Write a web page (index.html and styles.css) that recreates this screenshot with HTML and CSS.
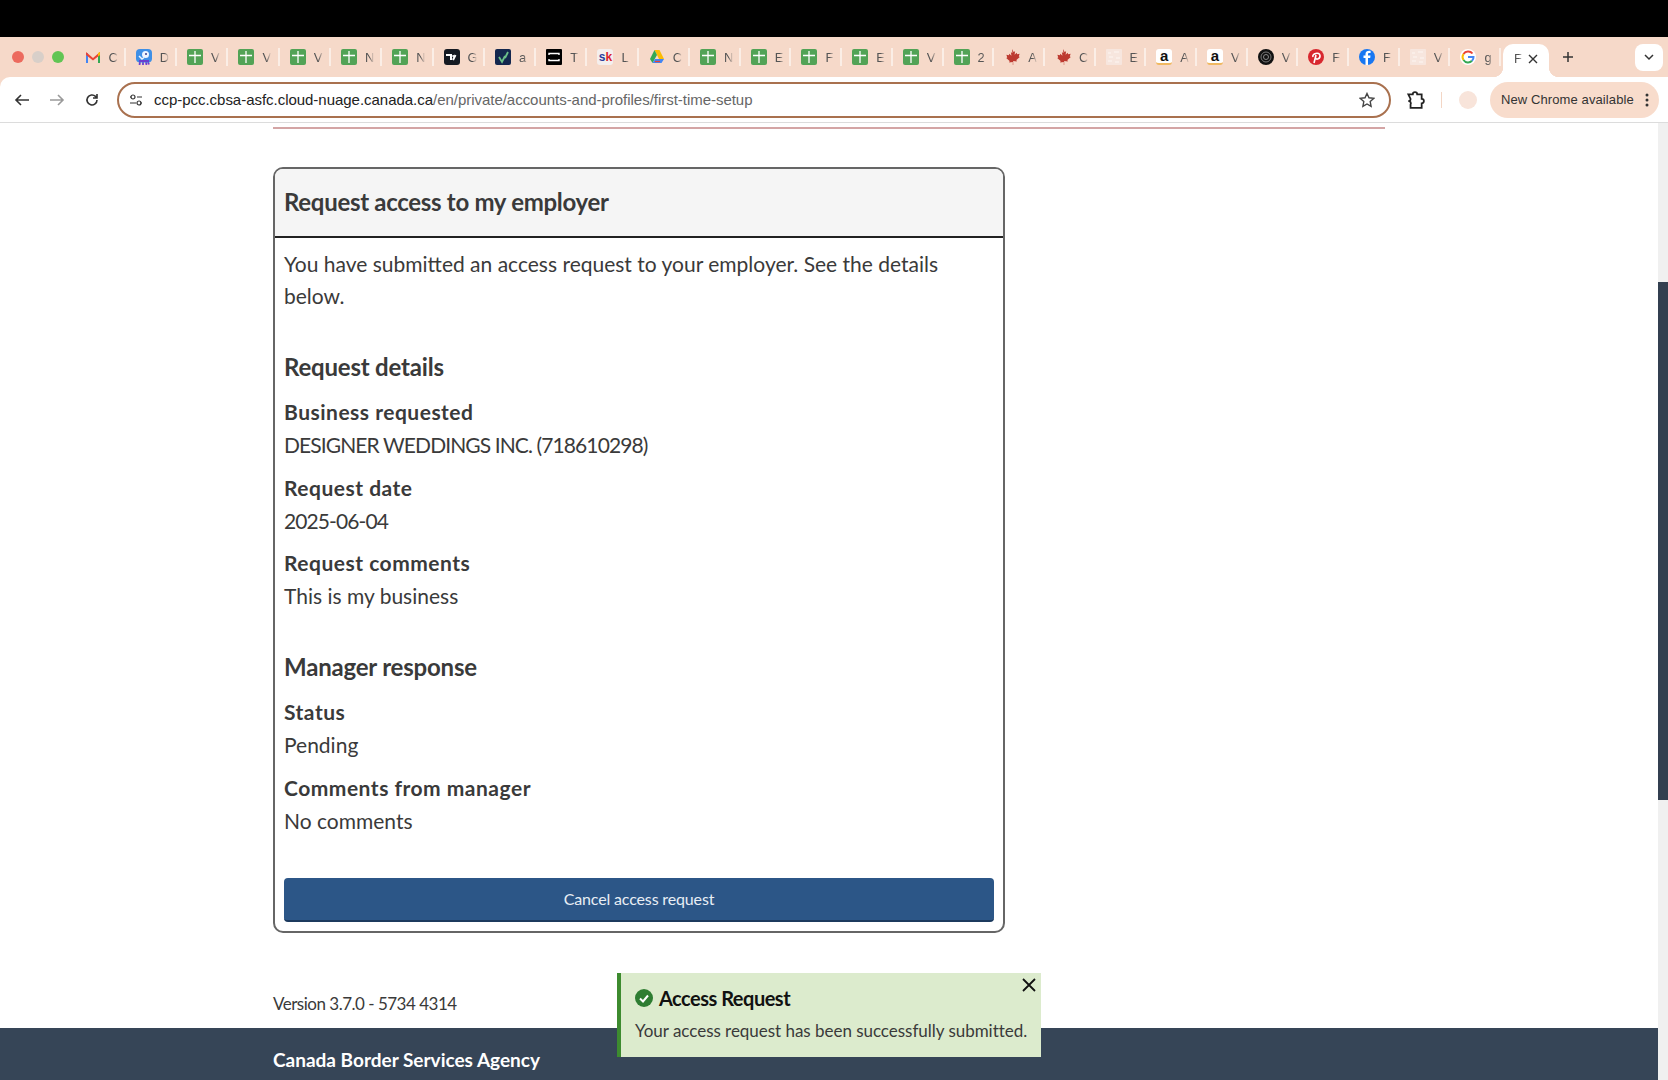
FILE: index.html
```html
<!DOCTYPE html>
<html lang="en">

<head>
    <meta charset="UTF-8">
    <meta name="viewport" content="width=device-width, initial-scale=1.0">
    <title>Request access to my employer</title>
    <link rel="stylesheet" href="styles.css">
</head>

<body>
    <svg class="defs" width="0" height="0">
        <symbol id="sheet" viewBox="0 0 16 16">
            <rect width="16" height="16" rx="2" fill="#52a356" />
            <path d="M8 2v12M2 6.500h12" stroke="#fff" stroke-width="1.300" />
        </symbol>
        <symbol id="maple" viewBox="0 0 16 16">
            <path fill="#bd3a30" d="M8 0l1.600 3 1.500-.8-.5 3.600 2-2 .6 1.400 2.400-.4-.8 2.600 1 .6-3.400 3 .4 1.400-3.600-.5V16h-.4v-3.100l-3.600.5.4-1.400-3.400-3 1-.6-.8-2.600 2.400.4.6-1.400 2 2-.5-3.600 1.500.8z" />
        </symbol>
        <symbol id="blank" viewBox="0 0 16 16">
            <rect width="16" height="16" rx="1" fill="#f7e6de" />
            <path d="M2 4h3M8 3h5M3 8h4M10 9h4M2 12h4M9 13h4" stroke="#fbf1ec" stroke-width="1.500" />
        </symbol>
    </svg>

    <div class="top-bar"></div>

    <div class="tab-strip">
        <div class="traffic">
            <span class="dot dot-red"></span>
            <span class="dot dot-grey"></span>
            <span class="dot dot-green"></span>
        </div>
        <div class="tabs">
            <div class="tab">
                <svg class="fav" viewBox="0 0 16 16">
                    <path d="M1 14V4l2 0 0 10z" fill="#4285f4" />
                    <path d="M13 14V4l2 0 0 10z" fill="#34a853" />
                    <path d="M1 3l7 6 7-6v3L8 11.500 1 6z" fill="#ea4335" />
                    <path d="M13 4l2-1v3l-2 1.500z" fill="#fbbc04" />
                </svg>
                <span class="tab-name">C</span>
            </div>
            <div class="tab">
                <svg class="fav" viewBox="0 0 16 16">
                    <path d="M4 13l-.5 3M7 13v3M10 13l.5 3M12 13l1 2.500" stroke="#6a3fd0" stroke-width="1.800" />
                    <rect y="0" width="16" height="13.500" rx="4" fill="#3f8fe6" />
                    <path d="M3 13h10v-2H3z" fill="#6a3fd0" />
                    <circle cx="9.500" cy="5.500" r="3.500" fill="#eef5ff" />
                    <circle cx="10" cy="5" r="1" fill="#3a3a8a" />
                    <path d="M3 7l3 3 2-1.500" stroke="#eef5ff" stroke-width="1.500" fill="none" />
                </svg>
                <span class="tab-name">D</span>
            </div>
            <div class="tab"><svg class="fav"><use href="#sheet" /></svg><span class="tab-name">V</span></div>
            <div class="tab"><svg class="fav"><use href="#sheet" /></svg><span class="tab-name">V</span></div>
            <div class="tab"><svg class="fav"><use href="#sheet" /></svg><span class="tab-name">V</span></div>
            <div class="tab"><svg class="fav"><use href="#sheet" /></svg><span class="tab-name">N</span></div>
            <div class="tab"><svg class="fav"><use href="#sheet" /></svg><span class="tab-name">N</span></div>
            <div class="tab">
                <svg class="fav" viewBox="0 0 16 16">
                    <rect width="16" height="16" rx="3" fill="#151a22" />
                    <path d="M2 6h5v5M9 11l2.500-5" stroke="#fff" stroke-width="2" fill="none" />
                    <circle cx="9.200" cy="7" r="1" fill="#fff" />
                </svg>
                <span class="tab-name">G</span>
            </div>
            <div class="tab">
                <svg class="fav" viewBox="0 0 16 16">
                    <rect width="16" height="16" rx="2" fill="#14274e" />
                    <path d="M4 8l3 5 3-6M10 9l3-6" stroke="#6cc08a" stroke-width="1.800" fill="none" />
                </svg>
                <span class="tab-name">a</span>
            </div>
            <div class="tab">
                <svg class="fav" viewBox="0 0 16 16">
                    <rect width="16" height="16" rx="1" fill="#000" />
                    <path d="M3 6V4.500h10V6M3 10v1.500h10V10" stroke="#fff" stroke-width="1.400" fill="none" />
                </svg>
                <span class="tab-name">T</span>
            </div>
            <div class="tab">
                <span class="fav fav-sk"><span class="sk-s">s</span><span class="sk-k">k</span></span>
                <span class="tab-name">L</span>
            </div>
            <div class="tab">
                <svg class="fav" viewBox="0 0 16 16">
                    <path d="M5.500 1h5L15 10H10z" fill="#fbbc04" />
                    <path d="M5.500 1L1 10l2.500 4L8 6z" fill="#34a853" />
                    <path d="M3.500 14h9L15 10H6z" fill="#4285f4" />
                    <path d="M6 12.500h5" stroke="#ea4335" stroke-width="1.200" />
                </svg>
                <span class="tab-name">C</span>
            </div>
            <div class="tab"><svg class="fav"><use href="#sheet" /></svg><span class="tab-name">N</span></div>
            <div class="tab"><svg class="fav"><use href="#sheet" /></svg><span class="tab-name">E</span></div>
            <div class="tab"><svg class="fav"><use href="#sheet" /></svg><span class="tab-name">F</span></div>
            <div class="tab"><svg class="fav"><use href="#sheet" /></svg><span class="tab-name">E</span></div>
            <div class="tab"><svg class="fav"><use href="#sheet" /></svg><span class="tab-name">V</span></div>
            <div class="tab"><svg class="fav"><use href="#sheet" /></svg><span class="tab-name">2</span></div>
            <div class="tab"><svg class="fav"><use href="#maple" /></svg><span class="tab-name">A</span></div>
            <div class="tab"><svg class="fav"><use href="#maple" /></svg><span class="tab-name">C</span></div>
            <div class="tab"><svg class="fav"><use href="#blank" /></svg><span class="tab-name">E</span></div>
            <div class="tab"><span class="fav fav-a">a</span><span class="tab-name">A</span></div>
            <div class="tab"><span class="fav fav-a">a</span><span class="tab-name">V</span></div>
            <div class="tab">
                <svg class="fav" viewBox="0 0 16 16">
                    <circle cx="8" cy="8" r="8" fill="#111" />
                    <circle cx="8" cy="8" r="5" fill="none" stroke="#777" />
                    <circle cx="8" cy="8" r="2.500" fill="none" stroke="#888" />
                </svg>
                <span class="tab-name">V</span>
            </div>
            <div class="tab">
                <svg class="fav" viewBox="0 0 16 16">
                    <circle cx="8" cy="8" r="8" fill="#d8282f" />
                    <path d="M6 14l2-8M5 8C3.500 4.500 11.500 2.500 12 6.500 12.300 10 8.500 11 7.500 9" stroke="#fff" stroke-width="1.600" fill="none" />
                </svg>
                <span class="tab-name">F</span>
            </div>
            <div class="tab">
                <svg class="fav" viewBox="0 0 16 16">
                    <circle cx="8" cy="8" r="8" fill="#1877f2" />
                    <path d="M9 16V9h2.200l.3-2.500H9V5.200c0-.8.300-1.200 1.300-1.200h1.300V1.800C9 1.300 6.500 2 6.500 5v1.500H4.500V9h2v7z" fill="#fff" />
                </svg>
                <span class="tab-name">F</span>
            </div>
            <div class="tab"><svg class="fav"><use href="#blank" /></svg><span class="tab-name">V</span></div>
            <div class="tab">
                <svg class="fav" viewBox="0 0 16 16">
                    <circle cx="8" cy="8" r="8" fill="#fff" />
                    <path d="M12.500 4.500A5.500 5.500 0 0 0 3.500 5" stroke="#ea4335" stroke-width="2" fill="none" />
                    <path d="M3.500 5a5.500 5.500 0 0 0 0 6" stroke="#fbbc04" stroke-width="2" fill="none" />
                    <path d="M3.500 11a5.500 5.500 0 0 0 8.500.8" stroke="#34a853" stroke-width="2" fill="none" />
                    <path d="M12 11.800A5 5 0 0 0 13.500 8H8" stroke="#4285f4" stroke-width="2" fill="none" />
                </svg>
                <span class="tab-name">g</span>
            </div>
            <div class="tab-active">
                <span class="tab-name">F</span>
                <svg class="tab-close" viewBox="0 0 10 10">
                    <path d="M1 1l8 8M9 1l-8 8" stroke="#333" stroke-width="1.400" />
                </svg>
            </div>
        </div>
        <svg class="new-tab" viewBox="0 0 12 12">
            <path d="M6 1v10M1 6h10" stroke="#333" stroke-width="1.500" />
        </svg>
        <div class="tab-search">
            <svg width="10" height="10" viewBox="0 0 10 10">
                <path d="M1 3l4 4 4-4" stroke="#333" stroke-width="1.500" fill="none" />
            </svg>
        </div>
    </div>

    <div class="toolbar">
        <svg class="tool" viewBox="0 0 16 16">
            <path d="M15 8H2M7 3L2 8l5 5" stroke="#333" stroke-width="1.600" fill="none" />
        </svg>
        <svg class="tool" viewBox="0 0 16 16">
            <path d="M1 8h13M9 3l5 5-5 5" stroke="#9a9a9a" stroke-width="1.600" fill="none" />
        </svg>
        <svg class="tool" viewBox="0 0 16 16">
            <path d="M13 8a5 5 0 1 1-1.500-3.600L13 6M13 2v4H9" stroke="#333" stroke-width="1.600" fill="none" />
        </svg>
        <div class="omnibox">
            <svg class="tune" viewBox="0 0 14 14">
                <path d="M1 4h4M8 4h5M1 10h6M11 10h2" stroke="#333" stroke-width="1.200" />
                <circle cx="4" cy="4" r="2" fill="white" stroke="#333" stroke-width="1.200" />
                <circle cx="10" cy="10" r="2" fill="none" stroke="#333" stroke-width="1.200" />
            </svg>
            <div class="url">ccp-pcc.cbsa-asfc.cloud-nuage.canada.ca<span class="url-path">/en/private/accounts-and-profiles/first-time-setup</span></div>
            <svg class="star" viewBox="0 0 16 16">
                <path d="M8 1.500l2 4.300 4.700.6-3.500 3.200.9 4.700L8 12l-4.100 2.300.9-4.700L1.300 6.400 6 5.800z" fill="none" stroke="#444" stroke-width="1.400" />
            </svg>
        </div>
        <svg class="puzzle" viewBox="0 0 18 18">
            <path d="M3 4h4a2 2 0 0 1 4 0h4v4a2 2 0 0 1 0 4v4H5v-3a2 2 0 0 0-2-3 2 2 0 0 0 2-2z" fill="none" stroke="#222" stroke-width="1.600" />
        </svg>
        <span class="tool-sep"></span>
        <span class="avatar"></span>
        <div class="update">
            <span>New Chrome available</span>
            <svg width="4" height="14" viewBox="0 0 4 14">
                <circle cx="2" cy="2" r="1.500" fill="#333" />
                <circle cx="2" cy="7" r="1.500" fill="#333" />
                <circle cx="2" cy="12" r="1.500" fill="#333" />
            </svg>
        </div>
    </div>

    <div class="viewport">
        <div class="page">
            <main class="content">
                <div class="rule"></div>
                <section class="card">
                    <h2 class="card-title">Request access to my employer</h2>
                    <div class="card-body">
                        <p class="intro">You have submitted an access request to your employer. See the details below.</p>
                        <h3>Request details</h3>
                        <dl>
                            <dt>Business requested</dt>
                            <dd class="caps">DESIGNER WEDDINGS INC. (718610298)</dd>
                            <dt>Request date</dt>
                            <dd class="caps">2025-06-04</dd>
                            <dt>Request comments</dt>
                            <dd>This is my business</dd>
                        </dl>
                        <h3>Manager response</h3>
                        <dl>
                            <dt>Status</dt>
                            <dd>Pending</dd>
                            <dt>Comments from manager</dt>
                            <dd>No comments</dd>
                        </dl>
                        <button class="cancel-btn">Cancel access request</button>
                    </div>
                </section>
                <div class="version">Version 3.7.0 - 5734 4314</div>
            </main>
            <footer class="site-footer">
                <div class="agency">Canada Border Services Agency</div>
            </footer>
            <div class="toast">
                <div class="toast-title">
                    <svg width="18" height="18" viewBox="0 0 18 18">
                        <circle cx="9" cy="9" r="9" fill="#2e7d32" />
                        <path d="M5 9.500l3 3 5-6" stroke="#fff" stroke-width="2" fill="none" />
                    </svg>
                    <span>Access Request</span>
                </div>
                <div class="toast-text">Your access request has been successfully submitted.</div>
                <svg class="toast-close" viewBox="0 0 14 14">
                    <path d="M1 1l12 12M13 1L1 13" stroke="#111" stroke-width="1.800" />
                </svg>
            </div>
        </div>
        <div class="scrollbar">
            <div class="scroll-thumb"></div>
        </div>
    </div>
</body>

</html>
```

FILE: styles.css
```css
* {
    box-sizing: border-box;
}

html,
body {
    height: 1080px;
    margin: 0;
    overflow: hidden;
}

body {
    display: flex;
    flex-direction: column;
    background-color: #f6d9c9;
    font-family: Lato, "Noto Sans", sans-serif;
    color: #3a3a3a;
}

.defs {
    position: absolute;
}

.top-bar {
    height: 37px;
    flex: none;
    background-color: black;
}

/* browser chrome */
.tab-strip {
    display: flex;
    align-items: center;
    height: 40px;
    flex: none;
    font-family: "Liberation Sans", sans-serif;
}

.traffic {
    display: flex;
    gap: 8px;
    width: 74.500px;
    padding-left: 12px;
    flex: none;
}

.dot {
    width: 12px;
    height: 12px;
    border-radius: 50%;
}

.dot-red {
    background-color: #ec6a5e;
}

.dot-grey {
    background-color: #d8cfc9;
}

.dot-green {
    background-color: #61c554;
}

.tabs {
    display: flex;
    align-items: center;
    height: 100%;
    flex: none;
}

.tab {
    display: flex;
    align-items: center;
    gap: 8px;
    width: 50.700px;
    height: 18px;
    padding-left: 10px;
    border-right: 2px solid #fbeee6;
}

.tab:nth-child(-n+12) {
    width: 51.300px;
}

.tab-name {
    width: 9px;
    overflow: hidden;
    font-size: 13px;
    color: #555;
    -webkit-mask-image: linear-gradient(to right, black 50%, transparent);
    mask-image: linear-gradient(to right, black 50%, transparent);
}

.fav {
    width: 16px;
    height: 16px;
    flex: none;
}

.fav-sk {
    display: flex;
    justify-content: center;
    background-color: #f4efee;
    border-radius: 3px;
    font-size: 12px;
    font-weight: 700;
    line-height: 16px;
}

.sk-s {
    color: #2a3f9d;
}

.sk-k {
    color: #d9232e;
}

.fav-a {
    background-color: white;
    border-radius: 3px;
    border-bottom: 2px solid #f0b860;
    color: #111;
    font-size: 15px;
    font-weight: 700;
    line-height: 13px;
    text-align: center;
}

.tab-active {
    position: relative;
    display: flex;
    align-items: center;
    justify-content: space-between;
    align-self: flex-end;
    width: 46px;
    height: 33px;
    margin-left: 2px;
    padding: 0 11px 4px 11px;
    background-color: white;
    border-radius: 10px 10px 0 0;
}

.tab-active::before,
.tab-active::after {
    content: "";
    position: absolute;
    bottom: 0;
    width: 10px;
    height: 10px;
}

.tab-active::before {
    left: -10px;
    background: radial-gradient(circle at 0 0, transparent 10px, white 10.500px);
}

.tab-active::after {
    right: -10px;
    background: radial-gradient(circle at 100% 0, transparent 10px, white 10.500px);
}

.tab-close {
    width: 10px;
    height: 10px;
}

.new-tab {
    width: 12px;
    height: 12px;
    margin-left: 13px;
}

.tab-search {
    display: flex;
    align-items: center;
    justify-content: center;
    width: 28px;
    height: 27px;
    margin-left: auto;
    margin-right: 5px;
    background-color: white;
    border-radius: 8px;
}

.toolbar {
    display: flex;
    align-items: center;
    height: 46px;
    flex: none;
    padding-left: 14px;
    background-color: white;
    border-bottom: 1px solid #dcdcdc;
    border-radius: 10px 0 0 0;
    font-family: "Liberation Sans", sans-serif;
}

.tool {
    width: 16px;
    height: 16px;
    margin-right: 19px;
    flex: none;
}

.omnibox {
    display: flex;
    align-items: center;
    width: 1274px;
    height: 36px;
    margin-left: -2px;
    padding: 0 14px 0 10px;
    border: 2.500px solid #a9714f;
    border-radius: 18px;
    flex: none;
}

.tune {
    width: 14px;
    height: 14px;
    margin-right: 11px;
}

.url {
    flex: 1;
    font-size: 15px;
    letter-spacing: -0.03px;
    color: #222;
}

.url-path {
    color: #666;
}

.star {
    width: 16px;
    height: 16px;
}

.puzzle {
    width: 20px;
    height: 20px;
    margin-left: 14px;
}

.tool-sep {
    width: 1px;
    height: 16px;
    margin-left: 16px;
    background-color: #f3d6c5;
}

.avatar {
    width: 18px;
    height: 18px;
    margin-left: 17px;
    border-radius: 50%;
    background-color: #f8e4da;
}

.update {
    display: flex;
    align-items: center;
    gap: 11px;
    height: 36px;
    margin-left: 13px;
    padding: 0 10px 0 11px;
    background-color: #f8dccc;
    border-radius: 18px;
    font-size: 13px;
    letter-spacing: 0.1px;
    color: #333;
}

/* page */
.viewport {
    display: flex;
    flex: 1;
    min-height: 0;
    background-color: white;
}

.page {
    position: relative;
    display: flex;
    flex-direction: column;
    flex: 1;
}

.content {
    flex: 1;
    padding: 4px 0 0 273px;
}

.rule {
    width: 1112px;
    height: 2px;
    background-color: #d4a5a5;
}

.card {
    width: 732px;
    margin-top: 38px;
    border: 2px solid #666;
    border-radius: 10px;
}

.card-title {
    height: 69px;
    margin: 0;
    padding: 0 9px;
    background-color: #f5f5f5;
    border-bottom: 2px solid #222;
    border-radius: 8px 8px 0 0;
    font-size: 24px;
    font-weight: 700;
    letter-spacing: -0.3px;
    line-height: 66px;
}

.card-body {
    padding: 10px 9px 9px;
    font-size: 21px;
    line-height: 32px;
}

.intro {
    margin: 0;
}

h3 {
    margin: 39px 0 0;
    font-size: 24px;
    font-weight: 700;
    letter-spacing: -0.2px;
    line-height: 32px;
}

dl {
    margin: 12px 0 1px;
    line-height: 33px;
}

dt {
    font-weight: 700;
    letter-spacing: 0.5px;
}

dd {
    margin: 0 0 9.500px;
}

.caps {
    letter-spacing: -0.9px;
}

.cancel-btn {
    display: block;
    width: 100%;
    height: 44px;
    margin-top: 41px;
    background-color: #2c5687;
    border: 0;
    border-bottom: 2px solid #1c3a5e;
    border-radius: 4px;
    color: #e8eef5;
    font-family: Lato, sans-serif;
    font-size: 16px;
    letter-spacing: -0.15px;
}

.version {
    margin-top: 59px;
    font-size: 17px;
    letter-spacing: -0.5px;
    line-height: 24px;
}

.site-footer {
    height: 52px;
    padding: 20px 0 0 273px;
    background-color: #364557;
    flex: none;
}

.agency {
    color: white;
    font-size: 19px;
    font-weight: 700;
    line-height: 24px;
}

.toast {
    position: absolute;
    top: 850px;
    left: 617px;
    width: 424px;
    height: 84px;
    padding: 11px 8px 0 14px;
    background-color: #dcebcd;
    border-left: 4px solid #3d8b2f;
}

.toast-title {
    display: flex;
    align-items: center;
    gap: 6px;
    color: #111;
    font-size: 20px;
    font-weight: 700;
    letter-spacing: -0.5px;
    line-height: 28px;
}

.toast-text {
    margin-top: 7px;
    font-size: 17px;
    letter-spacing: -0.03px;
    line-height: 24px;
}

.toast-close {
    position: absolute;
    top: 5px;
    right: 5px;
    width: 14px;
    height: 14px;
}

.scrollbar {
    width: 10px;
    flex: none;
    background-color: #f0f0f0;
}

.scroll-thumb {
    height: 518px;
    margin-top: 159px;
    background-color: #333f50;
}
```
